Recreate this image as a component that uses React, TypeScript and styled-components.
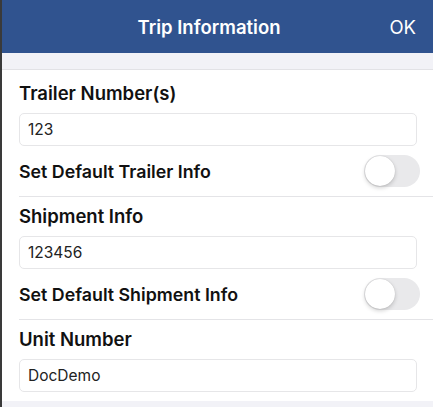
import React, { useState } from "react";
import styled, { createGlobalStyle } from "styled-components";

const Global = createGlobalStyle`
  html, body { margin: 0; padding: 0; background: #ffffff; }
  body { font-family: Inter, "Noto Sans", sans-serif; -webkit-font-smoothing: antialiased; }
  * { box-sizing: border-box; }
`;

const Screen = styled.div`
  width: 433px;
  height: 407px;
  display: flex;
  flex-direction: column;
  background: #ffffff;
  border-left: 2px solid #3a3a3a;
  overflow: hidden;
`;

const Header = styled.header`
  height: 53px;
  flex-shrink: 0;
  background: #30538f;
  display: grid;
  grid-template-columns: 1fr auto 1fr;
  align-items: center;
  padding: 0 17px 0 0;
  color: #ffffff;
`;

const Title = styled.h1`
  grid-column: 2;
  margin: 0;
  font-size: 18.5px;
  font-weight: 600;
`;

const HeaderButton = styled.span`
  grid-column: 3;
  justify-self: end;
  font-size: 18.5px;
  font-weight: 400;
`;

const Band = styled.div<{ $height: number; $top?: boolean }>`
  height: ${(p) => p.$height}px;
  flex-shrink: 0;
  background: #f2f2f7;
  border-bottom: ${(p) => (p.$top ? "1px solid #e2e2e6" : "none")};
`;

const Content = styled.div`
  display: flex;
  flex-direction: column;
  padding-left: 17px;
`;

const Section = styled.section<{ $first?: boolean; $divider?: boolean; $last?: boolean }>`
  padding-top: ${(p) => (p.$first ? 4 : 0)}px;
  padding-bottom: ${(p) => (p.$last ? 9 : 0)}px;
  border-bottom: ${(p) => (p.$divider ? "1px solid #e4e4e7" : "none")};
`;

const Label = styled.div`
  height: 39px;
  padding-top: 8px;
  font-size: 18.5px;
  line-height: 23px;
  font-weight: 600;
  color: #111111;
`;

const Field = styled.div`
  height: 33px;
  margin-right: 16px;
  border: 1px solid #e6e6e8;
  border-radius: 5px;
  display: flex;
  align-items: center;
  padding-left: 8px;
  font-size: 15.5px;
  color: #222222;
`;

const ToggleRow = styled.div`
  height: 50px;
  display: flex;
  align-items: center;
  justify-content: space-between;
  padding-right: 13px;
  font-size: 17.8px;
  font-weight: 600;
  color: #111111;
`;

const Track = styled.button<{ $on: boolean }>`
  position: relative;
  width: 56px;
  height: 32px;
  border: none;
  padding: 0;
  border-radius: 16px;
  background: ${(p) => (p.$on ? "#34c759" : "#e9e9eb")};
  cursor: pointer;
`;

const Knob = styled.span<{ $on: boolean }>`
  position: absolute;
  top: 1px;
  left: ${(p) => (p.$on ? 25 : 1)}px;
  width: 30px;
  height: 30px;
  border-radius: 50%;
  background: #ffffff;
  box-shadow: 0 2px 4px rgba(0, 0, 0, 0.18), 0 0 1px rgba(0, 0, 0, 0.2);
`;

const Toggle = () => {
  const [on, setOn] = useState(false);
  return (
    <Track $on={on} onClick={() => setOn(!on)} aria-pressed={on}>
      <Knob $on={on} />
    </Track>
  );
};

export default function App() {
  return (
    <>
      <Global />
      <Screen>
        <Header>
          <Title>Trip Information</Title>
          <HeaderButton>OK</HeaderButton>
        </Header>
        <Band $height={17} $top />
        <Content>
          <Section $first $divider>
            <Label>Trailer Number(s)</Label>
            <Field>123</Field>
            <ToggleRow>
              Set Default Trailer Info
              <Toggle />
            </ToggleRow>
          </Section>
          <Section $divider>
            <Label>Shipment Info</Label>
            <Field>123456</Field>
            <ToggleRow>
              Set Default Shipment Info
              <Toggle />
            </ToggleRow>
          </Section>
          <Section $last>
            <Label>Unit Number</Label>
            <Field>DocDemo</Field>
          </Section>
        </Content>
        <Band $height={20} />
      </Screen>
    </>
  );
}
